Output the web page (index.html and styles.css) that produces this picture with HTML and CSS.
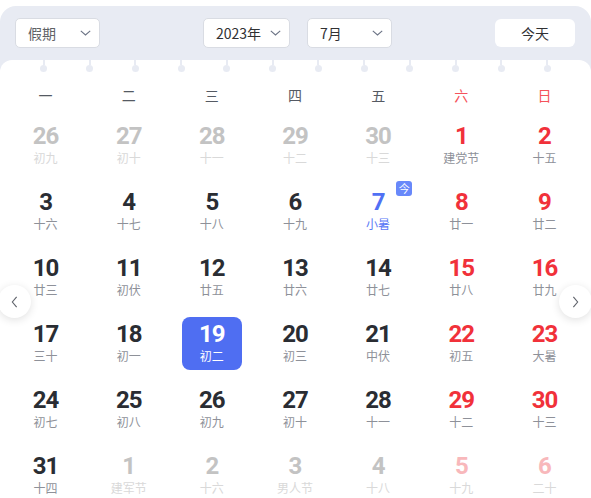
FILE: index.html
```html
<!DOCTYPE html>
<html lang="zh">
<head>
<meta charset="utf-8">
<title>日历</title>
<link rel="stylesheet" href="styles.css">
</head>
<body>
<div class="cal">
  <div class="toolbar">
    <div class="select sel-holiday"><span class="sel-text muted">假期</span><svg class="chev" viewBox="0 0 11 6"><path d="M0.8 0.8 L5.5 5 L10.2 0.8"/></svg></div>
    <div class="sel-group">
      <div class="select sel-year"><span class="sel-text">2023年</span><svg class="chev" viewBox="0 0 11 6"><path d="M0.8 0.8 L5.5 5 L10.2 0.8"/></svg></div>
      <div class="select sel-month"><span class="sel-text">7月</span><svg class="chev" viewBox="0 0 11 6"><path d="M0.8 0.8 L5.5 5 L10.2 0.8"/></svg></div>
    </div>
    <button class="today-btn">今天</button>
  </div>
  <div class="card">
    <div class="rings">
      <span class="ring"></span><span class="ring"></span><span class="ring"></span><span class="ring"></span>
      <span class="ring"></span><span class="ring"></span><span class="ring"></span><span class="ring"></span>
      <span class="ring"></span><span class="ring"></span><span class="ring"></span><span class="ring"></span>
    </div>
    <div class="week">
      <span>一</span><span>二</span><span>三</span><span>四</span><span>五</span><span class="wk-red">六</span><span class="wk-red">日</span>
    </div>
    <div class="grid">
      <div class="cell other"><span class="num">26</span><span class="lunar">初九</span></div>
      <div class="cell other"><span class="num">27</span><span class="lunar">初十</span></div>
      <div class="cell other"><span class="num">28</span><span class="lunar">十一</span></div>
      <div class="cell other"><span class="num">29</span><span class="lunar">十二</span></div>
      <div class="cell other"><span class="num">30</span><span class="lunar">十三</span></div>
      <div class="cell red"><span class="num">1</span><span class="lunar">建党节</span></div>
      <div class="cell red"><span class="num">2</span><span class="lunar">十五</span></div>

      <div class="cell"><span class="num">3</span><span class="lunar">十六</span></div>
      <div class="cell"><span class="num">4</span><span class="lunar">十七</span></div>
      <div class="cell"><span class="num">5</span><span class="lunar">十八</span></div>
      <div class="cell"><span class="num">6</span><span class="lunar">十九</span></div>
      <div class="cell today"><span class="num">7</span><span class="lunar">小暑</span><span class="badge">今</span></div>
      <div class="cell red"><span class="num">8</span><span class="lunar">廿一</span></div>
      <div class="cell red"><span class="num">9</span><span class="lunar">廿二</span></div>

      <div class="cell"><span class="num">10</span><span class="lunar">廿三</span></div>
      <div class="cell"><span class="num">11</span><span class="lunar">初伏</span></div>
      <div class="cell"><span class="num">12</span><span class="lunar">廿五</span></div>
      <div class="cell"><span class="num">13</span><span class="lunar">廿六</span></div>
      <div class="cell"><span class="num">14</span><span class="lunar">廿七</span></div>
      <div class="cell red"><span class="num">15</span><span class="lunar">廿八</span></div>
      <div class="cell red"><span class="num">16</span><span class="lunar">廿九</span></div>

      <div class="cell"><span class="num">17</span><span class="lunar">三十</span></div>
      <div class="cell"><span class="num">18</span><span class="lunar">初一</span></div>
      <div class="cell selected"><span class="num">19</span><span class="lunar">初二</span></div>
      <div class="cell"><span class="num">20</span><span class="lunar">初三</span></div>
      <div class="cell"><span class="num">21</span><span class="lunar">中伏</span></div>
      <div class="cell red"><span class="num">22</span><span class="lunar">初五</span></div>
      <div class="cell red"><span class="num">23</span><span class="lunar">大暑</span></div>

      <div class="cell"><span class="num">24</span><span class="lunar">初七</span></div>
      <div class="cell"><span class="num">25</span><span class="lunar">初八</span></div>
      <div class="cell"><span class="num">26</span><span class="lunar">初九</span></div>
      <div class="cell"><span class="num">27</span><span class="lunar">初十</span></div>
      <div class="cell"><span class="num">28</span><span class="lunar">十一</span></div>
      <div class="cell red"><span class="num">29</span><span class="lunar">十二</span></div>
      <div class="cell red"><span class="num">30</span><span class="lunar">十三</span></div>

      <div class="cell"><span class="num">31</span><span class="lunar">十四</span></div>
      <div class="cell other"><span class="num">1</span><span class="lunar">建军节</span></div>
      <div class="cell other"><span class="num">2</span><span class="lunar">十六</span></div>
      <div class="cell other"><span class="num">3</span><span class="lunar">男人节</span></div>
      <div class="cell other"><span class="num">4</span><span class="lunar">十八</span></div>
      <div class="cell other-red"><span class="num">5</span><span class="lunar">十九</span></div>
      <div class="cell other-red"><span class="num">6</span><span class="lunar">二十</span></div>
    </div>
    <button class="nav nav-prev"><svg viewBox="0 0 8 14"><path d="M6.5 1 L1.5 7 L6.5 13"/></svg></button>
    <button class="nav nav-next"><svg viewBox="0 0 8 14"><path d="M1.5 1 L6.5 7 L1.5 13"/></svg></button>
  </div>
</div>
</body>
</html>
```

FILE: styles.css
```css
* { box-sizing: border-box; }
html, body { margin: 0; padding: 0; background: #fff; }
body {
  width: 591px;
  height: 498px;
  overflow: hidden;
  font-family: "Noto Sans CJK SC", "Noto Sans", sans-serif;
  padding-top: 6px;
}
.cal {
  background: #e8ebf3;
  border-radius: 16px 16px 0 0;
  height: 492px;
  display: flex;
  flex-direction: column;
}
.toolbar {
  height: 54px;
  display: flex;
  align-items: center;
  justify-content: space-between;
  padding: 0 16px 0 15px;
  flex: none;
}
.sel-group { display: flex; gap: 17px; }
.select {
  height: 30px;
  background: #fff;
  border: 1px solid #d9dce3;
  border-radius: 5px;
  display: flex;
  align-items: center;
  justify-content: space-between;
  padding: 0 8px 0 12px;
}
.sel-holiday { width: 85px; }
.sel-year { width: 87px; }
.sel-month { width: 85px; }
.sel-text {
  font-size: 14px;
  line-height: 20px;
  color: #303133;
}
.sel-text.muted { color: #606266; }
.chev {
  width: 11px;
  height: 6px;
  fill: none;
  stroke: #6b7385;
  stroke-width: 1.1;
}
.today-btn {
  width: 80px;
  height: 28px;
  border: none;
  border-radius: 6px;
  background: #fff;
  font-family: inherit;
  font-size: 14px;
  color: #303133;
  padding: 0;
}
.card {
  position: relative;
  flex: 1;
  background: #fff;
  border-radius: 12px 12px 0 0;
}
.rings {
  height: 12px;
  display: flex;
  justify-content: space-around;
  padding: 0 21px;
}
.ring {
  width: 7px;
  display: flex;
  flex-direction: column;
  align-items: center;
}
.ring::before {
  content: "";
  width: 2px;
  height: 5px;
  background: #e8ebf3;
}
.ring::after {
  content: "";
  width: 7px;
  height: 7px;
  border-radius: 50%;
  background: #e8ebf3;
}
.week {
  display: grid;
  grid-template-columns: repeat(7, 1fr);
  padding: 13px 5px 0 4px;
  height: 33px;
}
.week span {
  text-align: center;
  font-size: 14px;
  line-height: 20px;
  color: #555a63;
}
.week .wk-red { color: #f5535b; }
.grid {
  display: grid;
  grid-template-columns: repeat(7, 1fr);
  grid-auto-rows: 53px;
  row-gap: 13px;
  padding: 14px 5px 0 4px;
  justify-items: center;
}
.cell {
  position: relative;
  width: 60px;
  height: 53px;
  border-radius: 8px;
  display: flex;
  flex-direction: column;
  align-items: center;
  padding-top: 4px;
}
.num {
  font-family: Roboto, "DejaVu Sans", sans-serif;
  font-weight: 700;
  font-size: 24px;
  line-height: 26px;
  letter-spacing: -1px;
  color: #2a2d33;
}
.lunar {
  font-size: 12px;
  line-height: 14px;
  margin-top: 2px;
  color: #8e9199;
  white-space: nowrap;
}
.red .num { color: #f1313a; }
.other .num { color: #c3c3c3; }
.other .lunar { color: #d9d9d9; }
.other-red .num { color: #f8b8bb; }
.other-red .lunar { color: #d9d9d9; }
.today .num { color: #5070f4; }
.today .lunar { color: #5b7af6; }
.selected { background: #4f6ef2; }
.selected .num, .selected .lunar { color: #fff; }
.badge {
  position: absolute;
  top: -4px;
  left: 48px;
  width: 16px;
  height: 15px;
  border-radius: 3px;
  background: #6888fa;
  color: #fff;
  font-size: 11px;
  line-height: 15px;
  text-align: center;
}
.nav {
  position: absolute;
  top: 225px;
  width: 33px;
  height: 33px;
  border-radius: 50%;
  border: none;
  background: #fff;
  box-shadow: 0 2px 8px rgba(0, 0, 0, 0.12);
  padding: 0;
  display: flex;
  align-items: center;
  justify-content: center;
}
.nav svg {
  width: 7px;
  height: 12px;
  fill: none;
  stroke: #5f636b;
  stroke-width: 1.3;
}
.nav-prev { left: -2px; }
.nav-next { right: -1px; }
```
